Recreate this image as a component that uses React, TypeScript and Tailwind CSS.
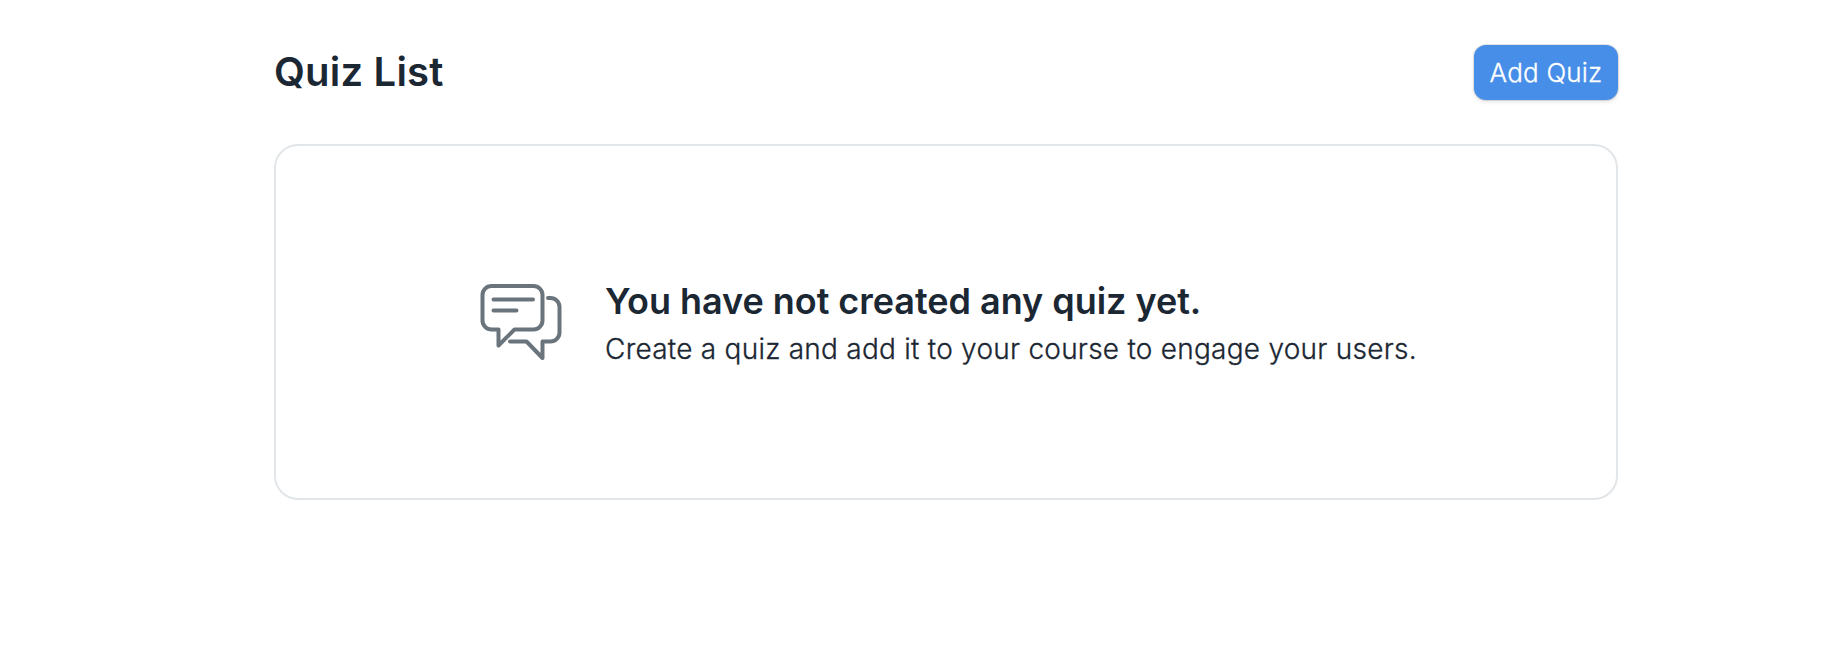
function DiscussionIcon() {
  return (
    <svg
      width="84"
      height="80"
      viewBox="0 0 84 80"
      fill="none"
      stroke="#6a747c"
      strokeWidth="4"
      strokeLinecap="round"
      strokeLinejoin="round"
      aria-hidden="true"
    >
      <path d="M12.5 4H54.5a9 9 0 0 1 9 9V38.500a9 9 0 0 1 -9 9H35.500L19.500 63.500V47.500H12.500a9 9 0 0 1 -9-9V13a9 9 0 0 1 9-9Z" />
      <path d="M14.500 17.500H54M14.500 28.500H37.500" />
      <path d="M69 16H71.500a9 9 0 0 1 9 9V50.500a9 9 0 0 1 -9 9H63.500V76L47.500 59.500H31" />
    </svg>
  );
}

export default function App() {
  return (
    <main className="h-[654px] bg-white pt-[45px] pl-[274px] font-['Inter',sans-serif] text-[#1b2733]">
      <div className="w-[1344px]">
        <header className="flex h-[55px] items-center justify-between">
          <h1 className="pb-0.5 text-[40px] leading-[46px] font-semibold tracking-[0.005em]">Quiz List</h1>
          <button className="h-[55px] w-[144px] rounded-[12px] bg-[#478ee8] text-[26px] leading-8 font-light tracking-[0.008em] text-white shadow-[0_0_0_1px_rgba(0,0,0,0.1),0_2px_4px_rgba(0,0,0,0.1)] [-webkit-text-stroke:0.3px_currentColor]">
            Add Quiz
          </button>
        </header>
        <section className="mt-11 flex h-[356px] items-center justify-center rounded-[24px] border-2 border-[#e2e6e9] pl-[2px]">
          <DiscussionIcon />
          <div className="ml-[42px] pt-1.5">
            <h2 className="text-[36px] leading-[42px] font-semibold tracking-[-0.001em]">
              You have not created any quiz yet.
            </h2>
            <p className="mt-1.5 w-[810px] text-[28px] leading-[42px] font-light tracking-[0.0088em] whitespace-nowrap [-webkit-text-stroke:0.3px_currentColor]">
              Create a quiz and add it to your course to engage your users.
            </p>
          </div>
        </section>
      </div>
    </main>
  );
}
